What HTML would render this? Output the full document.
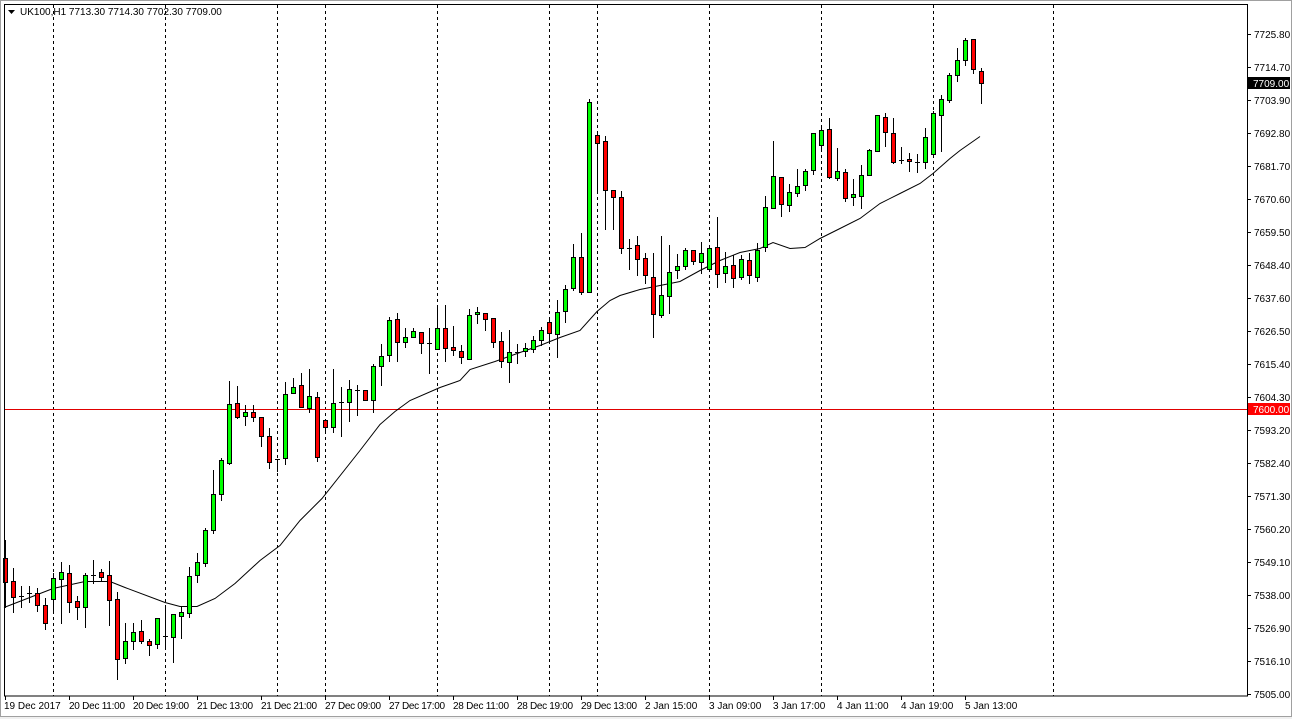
<!DOCTYPE html><html><head><meta charset="utf-8"><style>
html,body{margin:0;padding:0;background:#fff;width:1292px;height:719px;overflow:hidden}
svg{display:block}
text{font-family:"Liberation Sans",sans-serif;font-size:10px;fill:#000}
</style></head><body>
<svg id="s" width="1292" height="719" xmlns="http://www.w3.org/2000/svg">
<rect x="0" y="0" width="1292" height="719" fill="#f0f0f0"/>
<rect x="1" y="1" width="1290" height="715" fill="#fff"/>
<rect x="0.5" y="0.5" width="1291" height="716" fill="none" stroke="#a0a0a0"/>
<g id="grid" stroke="#000" stroke-dasharray="3,3" stroke-width="1"></g>
<line x1="4" y1="409.5" x2="1247" y2="409.5" stroke="#e00000"/>
<polyline id="ma" fill="none" stroke="#000" stroke-width="1"/>
<g id="c"></g>
<rect x="4.5" y="4.5" width="1243" height="691.5" fill="none" stroke="#000"/>
<g id="ax"></g>
<path d="M8 10 L15 10 L11.5 14 Z" fill="#000"/>
<text x="20" y="15">UK100,H1  7713.30 7714.30 7702.30 7709.00</text>
</svg>
<script>
var ns="http://www.w3.org/2000/svg",s=document.getElementById('s');
function el(p,t,a,txt){var e=document.createElementNS(ns,t);for(var k in a)e.setAttribute(k,a[k]);if(txt)e.textContent=txt;document.getElementById(p).appendChild(e);return e;}
[53,165,277,325,437,549,597,709,821,933,1053].forEach(function(x){el('grid','line',{x1:x+.5,y1:5,x2:x+.5,y2:696});});
var labs=["7725.80","7714.70","7703.90","7692.80","7681.70","7670.60","7659.50","7648.40","7637.60","7626.50","7615.40","7604.30","7593.20","7582.40","7571.30","7560.20","7549.10","7538.00","7526.90","7516.10","7505.00"];
labs.forEach(function(l,i){var y=34+i*33;if(l=="7703.90")y=100;el('ax','line',{x1:1247,y1:y+.5,x2:1251,y2:y+.5,stroke:"#000"});el('ax','text',{x:1254,y:y+4},l);});
el('ax','rect',{x:1248,y:77,width:42,height:12,fill:"#000"});el('ax','text',{x:1253,y:87,style:"fill:#fff"},"7709.00");
el('ax','rect',{x:1248,y:403,width:42,height:12,fill:"#ff0000"});el('ax','text',{x:1253,y:413,style:"fill:#fff"},"7600.00");
var tl=["19 Dec 2017","20 Dec 11:00","20 Dec 19:00","21 Dec 13:00","21 Dec 21:00","27 Dec 09:00","27 Dec 17:00","28 Dec 11:00","28 Dec 19:00","29 Dec 13:00","2 Jan 15:00","3 Jan 09:00","3 Jan 17:00","4 Jan 11:00","4 Jan 19:00","5 Jan 13:00"];
tl.forEach(function(l,i){var x=5+64*i;el('ax','line',{x1:x+.5,y1:696,x2:x+.5,y2:700,stroke:"#000"});var a={x:x+(i?0:-1),y:709};if(l.length==12)a.textLength=56;el('ax','text',a,l);});
var d=[
[558,582,540,607,'r'],[581,597,568,612,'r'],[596,596,586,607,'d'],[593,593,586,602,'d'],[593,605,588,611,'r'],[605,623,598,629,'r'],[578,599,573,613,'g'],[572,579,562,623,'g'],[573,602,565,612,'r'],[601,607,596,619,'r'],
[575,607,573,627,'g'],[575,575,560,583,'d'],[572,577,569,580,'r'],[575,600,561,625,'r'],[599,659,592,679,'r'],[641,658,623,663,'g'],[632,641,623,649,'g'],[631,641,620,643,'r'],[641,645,639,655,'r'],[618,644,618,648,'g'],
[636,636,608,647,'d'],[614,637,614,662,'g'],[612,616,607,638,'g'],[576,613,567,617,'g'],[562,575,553,582,'g'],[530,563,528,566,'g'],[494,530,470,533,'g'],[460,494,458,500,'g'],[404,463,381,464,'g'],[403,417,386,418,'r'],
[412,416,405,425,'g'],[412,417,405,421,'r'],[417,436,417,446,'r'],[436,462,428,468,'r'],[459,459,459,471,'d'],[394,458,382,464,'g'],[387,393,378,393,'g'],[385,407,373,407,'r'],[396,408,369,412,'g'],[397,457,392,461,'r'],
[420,427,420,432,'r'],[403,427,369,432,'g'],[402,402,387,436,'d'],[389,402,380,421,'g'],[390,390,385,415,'d'],[390,400,390,400,'r'],[366,400,364,412,'g'],[356,366,344,385,'g'],[320,355,317,361,'g'],[319,342,313,361,'r'],
[337,342,328,347,'g'],[331,337,328,337,'g'],[332,343,332,353,'r'],[343,343,328,373,'d'],[328,349,305,349,'g'],[328,348,305,361,'r'],[347,350,326,355,'r'],[351,357,345,363,'r'],[315,359,309,359,'g'],[312,314,307,323,'g'],
[313,319,313,330,'r'],[318,342,318,347,'r'],[341,361,332,367,'r'],[352,362,330,382,'g'],[352,352,344,363,'d'],[348,351,343,356,'g'],[340,349,336,352,'g'],[330,340,327,345,'g'],[322,333,320,343,'r'],[312,334,300,357,'g'],
[289,311,285,322,'g'],[257,288,244,290,'g'],[257,292,233,294,'r'],[102,292,99,292,'g'],[135,143,132,190,'r'],[141,190,136,229,'r'],[190,197,190,229,'r'],[197,248,191,253,'r'],[248,248,239,269,'d'],[245,259,236,275,'r'],
[258,275,253,283,'r'],[277,314,253,337,'r'],[295,315,236,317,'g'],[272,296,245,313,'g'],[266,270,254,278,'g'],[250,266,248,269,'g'],[250,261,250,264,'r'],[253,262,242,273,'g'],[248,269,248,271,'g'],[247,274,217,287,'r'],
[266,273,252,282,'g'],[265,278,255,287,'r'],[259,277,255,279,'g'],[260,275,253,283,'r'],[250,277,243,281,'g'],[207,247,196,251,'g'],[176,208,141,208,'g'],[177,204,177,216,'r'],[192,205,184,211,'g'],[186,193,169,196,'g'],
[171,185,169,190,'g'],[133,170,133,174,'g'],[130,145,127,151,'g'],[129,177,118,178,'r'],[171,178,148,180,'g'],[172,198,169,201,'r'],[194,197,179,205,'g'],[175,196,165,208,'g'],[150,175,149,175,'g'],[115,151,115,151,'g'],
[117,132,113,146,'r'],[133,162,118,163,'r'],[160,160,147,163,'d'],[159,161,153,171,'r'],[162,162,154,172,'d'],[137,162,128,168,'g'],[113,154,111,156,'g'],[99,115,95,151,'g'],[75,100,73,102,'g'],[60,75,48,81,'g'],
[40,60,38,65,'g'],[39,69,39,73,'r'],[71,83,68,103,'r']];
d.forEach(function(c,k){var x=5+8*k;
el('c','line',{x1:x+.5,y1:c[2],x2:x+.5,y2:c[3]+1,stroke:"#000"});
if(c[4]=='d'||c[1]-c[0]<1){el('c','line',{x1:x-2,y1:c[0]+.5,x2:x+3,y2:c[0]+.5,stroke:"#000"});}
else el('c','rect',{x:x-2+.5,y:c[0]+.5,width:4,height:c[1]-c[0],fill:c[4]=='g'?"#00ff00":"#ff0000",stroke:"#000"});});
var ma=[[4,607],[53,588],[85,581],[110,581],[125,587],[165,602],[180,606],[197,606],[215,598],[235,583],[260,560],[280,545],[300,520],[322,498],[360,450],[380,424],[395,411],[410,400],[440,387],[460,380],[470,369],[495,361],[520,352],[540,345],[560,337],[580,330],[597,311],[610,300],[620,295],[640,289],[660,285],[680,281],[700,270],[720,260],[740,252],[760,248],[773,242],[790,248],[805,247],[820,238],[840,228],[860,218],[880,203],[900,193],[920,183],[933,173],[950,158],[960,150],[980,136]];
document.getElementById('ma').setAttribute('points',ma.map(function(p){return p[0]+','+(p[1]+.5)}).join(' '));
</script>
</body></html>
